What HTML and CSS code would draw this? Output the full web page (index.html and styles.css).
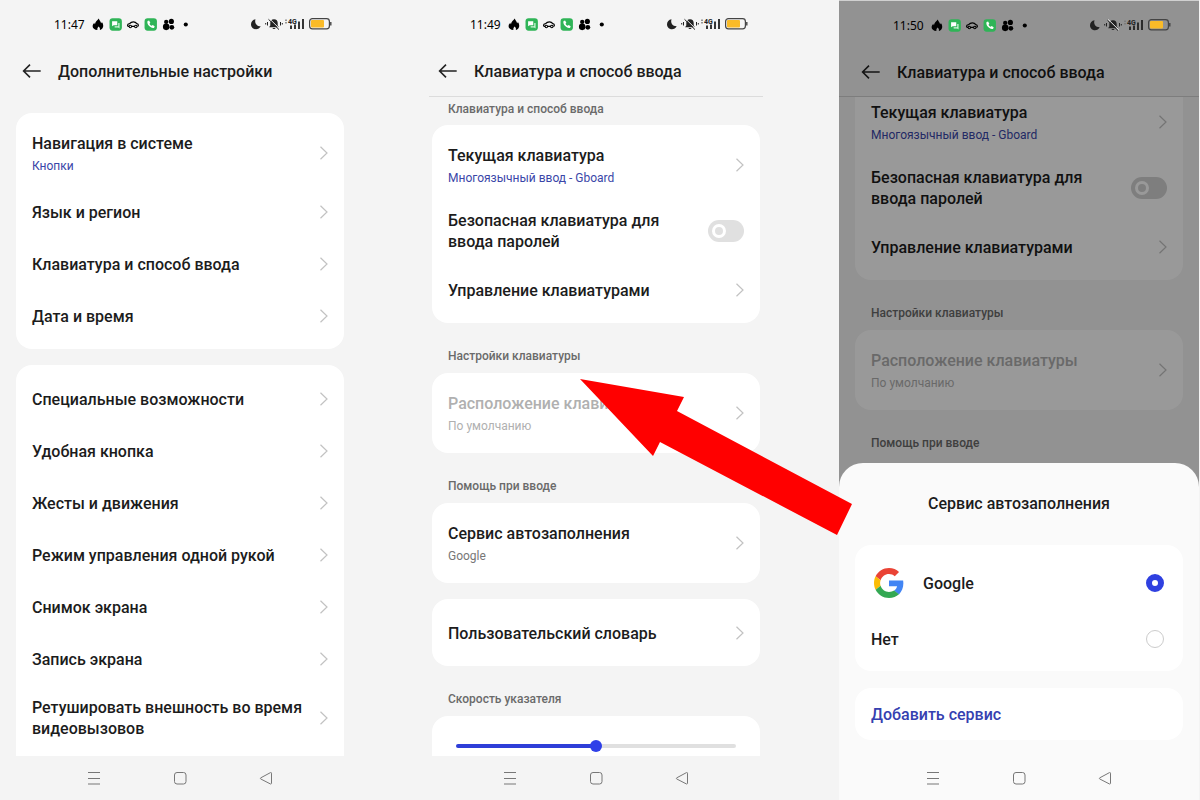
FILE: index.html
```
<!DOCTYPE html>
<html lang="ru">
<head>
  <meta charset="UTF-8">
  <title>Сервис автозаполнения</title>
  <meta name="viewport" content="width=device-width,initial-scale=1">
  <link rel="stylesheet" href="styles.css">
</head>
<body>
  <!-- shared icons -->
  <svg class="defs" aria-hidden="true">
    <symbol id="left-icons" viewBox="0 0 98 14">
      <path d="M6.6 1.2c.6 2.300 2 2.800 2.200 4.600.5-.3.700-.8.800-1.300 1.500 2 1.700 4.200.7 5.900-.6 1-1.500 1.700-2.700 2 .5-1.600-.2-2.500-1.200-3.500-.9 1.100-1.600 2-1.100 3.500C2.500 12 .600 10.500.600 8.600c0-1.500.8-2.500 1.700-3.400 0 .8.200 1.200.6 1.500C3 4.400 4.900 3.600 6.600 1.200z"/>
      <rect x="17" y="1" width="12" height="12" rx="3" fill="#2fb457"/>
      <path d="M19.500 3.800h5v4h-3.500l-1.500 1z" fill="#fff"/>
      <path d="M22 8.800h3.500V5.500h1.200v5.500l-1.200-1H22z" fill="#d4f5dd"/>
      <path d="M36 8.800h-.7c-.6 0-.8-.4-.8-1 0-1 .8-1.500 2-1.600 1-1.300 2-1.700 3.700-1.700 1.500 0 2.500.6 3.300 1.700 1 .1 1.500.6 1.500 1.500 0 .7-.3 1.100-1 1.100M38.500 8.800h3" fill="none" stroke="#000" stroke-width="1.200"/>
      <circle cx="37.200" cy="8.900" r="1.200" fill="none" stroke="#000"/>
      <circle cx="42.500" cy="8.900" r="1.200" fill="none" stroke="#000"/>
      <rect x="51" y="1" width="12" height="12" rx="3" fill="#2fb457"/>
      <path d="M54 3.700l1.400-.5 1.200 2-.8 1c.5 1 1 1.500 2.100 2.100l1-.8 1.900 1.200-.5 1.400c-.7.700-2.100.4-3.600-.6-1.700-1.200-2.900-2.900-3-4.500 0-.6.100-1 .3-1.300z" fill="#fff"/>
      <circle cx="72" cy="4.500" r="2.100"/>
      <circle cx="77" cy="4" r="2.500"/>
      <circle cx="72" cy="9.300" r="3.200"/>
      <circle cx="77.500" cy="9.700" r="2.300"/>
      <circle cx="91" cy="7" r="2"/>
    </symbol>
    <symbol id="right-icons" viewBox="0 0 84 14">
      <path d="M6.500 2.200C5.300 6 7.600 9.300 11.700 9.200 10.700 11.200 9 12.200 7 12.200 4 12.200 2 9.900 2 7.200 2 4.600 3.800 2.500 6.500 2.200z" fill="#222"/>
      <path d="M25 2.300c2.500 0 3.700 1.500 3.700 3.700v2.500l1.200 1.700H20.100L21.300 8.500V6c0-2.200 1.200-3.700 3.700-3.700zM23.500 11h3c-.2 1.300-2.800 1.300-3 0z" fill="#222"/>
      <path d="M20.200 1.500l10.500 10.300" stroke="#f4f4f4" stroke-width="1"/>
      <path d="M19.500 2.300l10.500 10.300M18.500 5v3.500M31.500 5v3.500M16.700 6v1.500M33.300 6v1.500" stroke="#222" stroke-width="1"/>
      <path d="M37 2.500v1.500M37 5v1.500" stroke="#777" stroke-width="1.500"/>
      <text x="39" y="6.500" class="net">4G</text>
      <path d="M42 8.500v3.500M46 7.500v4.500M50 4.500v7.500M54 2v10" stroke="#222" stroke-width="1.800"/>
      <rect x="60.600" y="1.600" width="19.800" height="10.300" rx="2.800" fill="none" stroke="#444" stroke-width="1.200"/>
      <path d="M81.800 5v3.500" stroke="#444" stroke-width="1.400"/>
      <rect x="62" y="3" width="13" height="7.500" rx="1" fill="#fabb28"/>
    </symbol>
    <symbol id="back" viewBox="0 0 20 16">
      <path d="M18.700 8H1.800M8 1.600L1.600 8 8 14.400" fill="none" stroke="#222" stroke-width="1.600"/>
    </symbol>
    <symbol id="chevron" viewBox="0 0 9 14">
      <path d="M1.500 .700L8 7 1.500 13.300" fill="none" stroke="#c2c2c2" stroke-width="1.200"/>
    </symbol>
    <symbol id="nav-menu" viewBox="0 0 14 14">
      <path d="M1 1.500h12M1 7.500h12M1 13h12" stroke="#777" stroke-width="1"/>
    </symbol>
    <symbol id="nav-home" viewBox="0 0 14 14">
      <rect x="1.500" y="1.500" width="11.500" height="11.500" rx="2.500" fill="none" stroke="#777" stroke-width="1"/>
    </symbol>
    <symbol id="nav-back" viewBox="0 0 14 14">
      <path d="M12.500 2.200v10c0 .8-.5 1-1.200.7L1.800 8c-.6-.4-.6-.9 0-1.200l9.500-5.100c.7-.4 1.200-.2 1.200.5z" fill="none" stroke="#777" stroke-width="1"/>
    </symbol>
  </svg>

  <main class="screens">
    <section class="phone">
      <div class="status">
        <span>11:47</span>
        <svg class="left-icons"><use href="#left-icons"/></svg>
        <svg class="right-icons"><use href="#right-icons"/></svg>
      </div>
      <header class="header">
        <button class="back" aria-label="Назад"><svg><use href="#back"/></svg></button>
        <h1>Дополнительные настройки</h1>
      </header>
      <div class="list list-top">
        <div class="card">
          <a class="row tall" href="#"><span>Навигация в системе<small class="blue">Кнопки</small></span><svg><use href="#chevron"/></svg></a>
          <a class="row" href="#"><span>Язык и регион</span><svg><use href="#chevron"/></svg></a>
          <a class="row" href="#"><span>Клавиатура и способ ввода</span><svg><use href="#chevron"/></svg></a>
          <a class="row" href="#"><span>Дата и время</span><svg><use href="#chevron"/></svg></a>
        </div>
        <div class="card">
          <a class="row" href="#"><span>Специальные возможности</span><svg><use href="#chevron"/></svg></a>
          <a class="row" href="#"><span>Удобная кнопка</span><svg><use href="#chevron"/></svg></a>
          <a class="row" href="#"><span>Жесты и движения</span><svg><use href="#chevron"/></svg></a>
          <a class="row" href="#"><span>Режим управления одной рукой</span><svg><use href="#chevron"/></svg></a>
          <a class="row" href="#"><span>Снимок экрана</span><svg><use href="#chevron"/></svg></a>
          <a class="row" href="#"><span>Запись экрана</span><svg><use href="#chevron"/></svg></a>
          <a class="row tall" href="#"><span>Ретушировать внешность во время видеовызовов</span><svg><use href="#chevron"/></svg></a>
        </div>
      </div>
      <nav class="nav">
        <button aria-label="Меню"><svg><use href="#nav-menu"/></svg></button>
        <button aria-label="Домой"><svg><use href="#nav-home"/></svg></button>
        <button aria-label="Назад"><svg><use href="#nav-back"/></svg></button>
      </nav>
    </section>

    <section class="phone">
      <div class="status">
        <span>11:49</span>
        <svg class="left-icons"><use href="#left-icons"/></svg>
        <svg class="right-icons"><use href="#right-icons"/></svg>
      </div>
      <header class="header">
        <button class="back" aria-label="Назад"><svg><use href="#back"/></svg></button>
        <h1>Клавиатура и способ ввода</h1>
      </header>
      <hr class="divider">
      <div class="list">
        <h2 class="first">Клавиатура и способ ввода</h2>
        <div class="card">
          <a class="row tall" href="#"><span>Текущая клавиатура<small class="blue">Многоязычный ввод - Gboard</small></span><svg><use href="#chevron"/></svg></a>
          <label class="row tall"><span>Безопасная клавиатура для ввода паролей</span><input type="checkbox" class="switch"></label>
          <a class="row" href="#"><span>Управление клавиатурами</span><svg><use href="#chevron"/></svg></a>
        </div>
        <h2>Настройки клавиатуры</h2>
        <div class="card">
          <a class="row tall disabled" href="#"><span>Расположение клавиатуры<small>По умолчанию</small></span><svg><use href="#chevron"/></svg></a>
        </div>
        <h2>Помощь при вводе</h2>
        <div class="card">
          <a class="row tall" href="#"><span>Сервис автозаполнения<small>Google</small></span><svg><use href="#chevron"/></svg></a>
        </div>
        <div class="card">
          <a class="row" href="#"><span>Пользовательский словарь</span><svg><use href="#chevron"/></svg></a>
        </div>
        <h2>Скорость указателя</h2>
        <div class="card slider-card">
          <input type="range" min="0" max="100" value="50" aria-label="Скорость указателя">
        </div>
      </div>
      <nav class="nav">
        <button aria-label="Меню"><svg><use href="#nav-menu"/></svg></button>
        <button aria-label="Домой"><svg><use href="#nav-home"/></svg></button>
        <button aria-label="Назад"><svg><use href="#nav-back"/></svg></button>
      </nav>
    </section>

    <section class="phone dimmed">
      <div class="status">
        <span>11:50</span>
        <svg class="left-icons"><use href="#left-icons"/></svg>
        <svg class="right-icons"><use href="#right-icons"/></svg>
      </div>
      <header class="header">
        <button class="back" aria-label="Назад"><svg><use href="#back"/></svg></button>
        <h1>Клавиатура и способ ввода</h1>
      </header>
      <hr class="divider">
      <div class="list">
        <div class="card scrolled">
          <a class="row tall" href="#"><span>Текущая клавиатура<small class="blue">Многоязычный ввод - Gboard</small></span><svg><use href="#chevron"/></svg></a>
          <label class="row tall"><span>Безопасная клавиатура для ввода паролей</span><input type="checkbox" class="switch"></label>
          <a class="row" href="#"><span>Управление клавиатурами</span><svg><use href="#chevron"/></svg></a>
        </div>
        <h2>Настройки клавиатуры</h2>
        <div class="card">
          <a class="row tall disabled" href="#"><span>Расположение клавиатуры<small>По умолчанию</small></span><svg><use href="#chevron"/></svg></a>
        </div>
        <h2>Помощь при вводе</h2>
      </div>
      <div class="scrim"></div>
      <div class="sheet">
        <h3>Сервис автозаполнения</h3>
        <div class="card">
          <label class="row option-main">
            <svg class="google" viewBox="0 0 48 48">
              <path fill="#EA4335" d="M24 9.500c3.540 0 6.710 1.220 9.210 3.600l6.850-6.850C35.900 2.380 30.470 0 24 0 14.620 0 6.510 5.380 2.560 13.220l7.980 6.190C12.430 13.720 17.740 9.500 24 9.500z"/>
              <path fill="#4285F4" d="M46.980 24.550c0-1.570-.15-3.090-.38-4.550H24v9.020h12.940c-.58 2.960-2.260 5.480-4.780 7.180l7.730 6c4.510-4.180 7.090-10.360 7.090-17.650z"/>
              <path fill="#FBBC05" d="M10.530 28.590c-.48-1.450-.76-2.990-.76-4.590s.27-3.140.76-4.590l-7.980-6.190C.92 16.460 0 20.120 0 24c0 3.880.92 7.540 2.560 10.780l7.970-6.190z"/>
              <path fill="#34A853" d="M24 48c6.480 0 11.930-2.130 15.890-5.810l-7.730-6c-2.150 1.450-4.920 2.300-8.160 2.300-6.260 0-11.570-4.220-13.470-9.910l-7.980 6.190C6.510 42.620 14.620 48 24 48z"/>
            </svg>
            <span>Google</span>
            <input type="radio" name="service" checked>
          </label>
          <label class="row option">
            <span>Нет</span>
            <input type="radio" name="service">
          </label>
        </div>
        <button class="add">Добавить сервис</button>
        <nav class="nav">
          <button aria-label="Меню"><svg><use href="#nav-menu"/></svg></button>
          <button aria-label="Домой"><svg><use href="#nav-home"/></svg></button>
          <button aria-label="Назад"><svg><use href="#nav-back"/></svg></button>
        </nav>
      </div>
    </section>

    <svg class="arrow" viewBox="0 0 274 158" aria-hidden="true">
      <path d="M0 0L104 18 97 32 272 125 257 156 80 63 73 77z" fill="#f00"/>
    </svg>
  </main>
</body>
</html>
```
FILE: styles.css
```
*, *::before { box-sizing: border-box; }
body { font-family: Roboto, sans-serif; background: #f4f4f4; color: #1c1c1c; margin: 0; }
.defs { display: none; }
button { background: none; border: none; padding: 0; font: inherit; color: inherit; cursor: pointer; }

.screens { position: relative; display: flex; height: 100vh; }
.phone { flex: 0 0 30%; display: flex; flex-direction: column; min-height: 0; }
.phone:nth-child(2) { margin-left: 56px; }
.phone:nth-child(3) { margin-left: auto; margin-right: 1px; }

.status { display: flex; align-items: center; height: 48px; padding: 0 27px 0 54px; font: 400 12px "Noto Sans", sans-serif; color: #000; }
.left-icons { width: 101px; height: 15px; margin-left: 7px; }
.right-icons { width: 84px; height: 14px; margin-left: auto; }
.net { font: 700 7px Roboto, sans-serif; fill: #222; }

.header { display: flex; align-items: center; gap: 16px; height: 46px; padding: 0 22px; }
.header h1 { font-size: 16px; font-weight: 500; margin: 0; }
.back svg { display: block; width: 20px; height: 16px; }
.divider { width: 334px; max-width: 100%; height: 1px; margin: 2px auto 0; border: none; background: #dcdcdc; flex: none; }

.list { flex: 1; min-height: 0; overflow: hidden; padding: 0 16px; }
.list-top { padding: 0; margin: 19px 16px 0; }
.list h2 { font-size: 12px; line-height: 16px; font-weight: 500; color: #6a6a6a; margin: 0; padding: 25px 16px 9px; }
.list h2.first { padding: 4px 16px 8px; }

.card { background: #fff; border-radius: 16px; padding: 7px 16px; }
.card + .card { margin-top: 16px; padding-top: 8px; }
.list-top .card:last-child { padding-bottom: 24px; }
.row { display: flex; align-items: center; justify-content: space-between; gap: 12px; min-height: 52px; font-size: 16px; line-height: 21px; font-weight: 500; color: inherit; text-decoration: none; }
.row > svg { width: 9px; height: 14px; flex: none; }
.row small { display: block; font-size: 12px; line-height: 16px; font-weight: 400; color: #777; margin-top: 4px; }
.row .blue { color: #3a46a8; }
.tall { min-height: 66px; }
.disabled { color: #b0b0b0; }
.disabled small { color: #b0b0b0; }

.switch { appearance: none; position: relative; flex: none; width: 36px; height: 22px; margin: 0; border-radius: 11px; background: #e0e0e0; }
.switch::before { content: ""; position: absolute; left: 4px; top: 4px; width: 14px; height: 14px; border: 3px solid #fff; border-radius: 50%; }
.dimmed .switch { background: #d2d2d2; }

.slider-card { padding: 22px 24px; }
input[type="range"] { appearance: none; display: block; width: 100%; height: 16px; margin: 0; background: none; }
input[type="range"]::-webkit-slider-runnable-track { height: 4px; border-radius: 2px; background: linear-gradient(to right, #2e3ed8 50%, #e0e0e0 50%); }
input[type="range"]::-webkit-slider-thumb { appearance: none; width: 12px; height: 12px; margin-top: -4px; border-radius: 50%; background: #2f40e8; }

.nav { display: flex; justify-content: center; align-items: center; gap: 72px; height: 44px; flex: none; }
.nav svg { display: block; width: 14px; height: 14px; }

/* third screen: dimmed list under the bottom sheet */
.dimmed { position: relative; border-top: 1px solid #d0d0d0; }
.dimmed .divider { width: 100%; margin-top: 1px; background: #d0d0d0; }
.dimmed .status { position: relative; z-index: 2; }
.scrolled { margin-top: -15px; }
.scrim { position: absolute; inset: 0; background: rgba(0, 0, 0, 0.4); }
.sheet { position: absolute; left: 0; right: 0; bottom: 0; background: #fafafa; border-radius: 24px 24px 0 0; }
.sheet h3 { font-size: 16px; line-height: 82px; font-weight: 500; text-align: center; margin: 0; }
.sheet .card { margin: 0 16px; }
.option-main { min-height: 62px; }
.option { min-height: 50px; }
.row > .google { width: 30px; height: 30px; margin-left: 3px; }
.google + span { flex: 1; margin-left: 7px; }
input[type="radio"] { appearance: none; width: 18px; height: 18px; margin: 0 3px 0 0; border: 1px solid #ccc; border-radius: 50%; background: #fff; }
input[type="radio"]:checked { border: 6px solid #2f40e0; }
.add { display: block; width: calc(100% - 32px); height: 52px; margin: 17px 16px 16px; padding: 0 16px; border-radius: 16px; background: #fff; font-size: 16px; font-weight: 500; text-align: left; color: #3540b0; }

.arrow { position: absolute; left: 580px; top: 379px; width: 274px; height: 158px; }
```
